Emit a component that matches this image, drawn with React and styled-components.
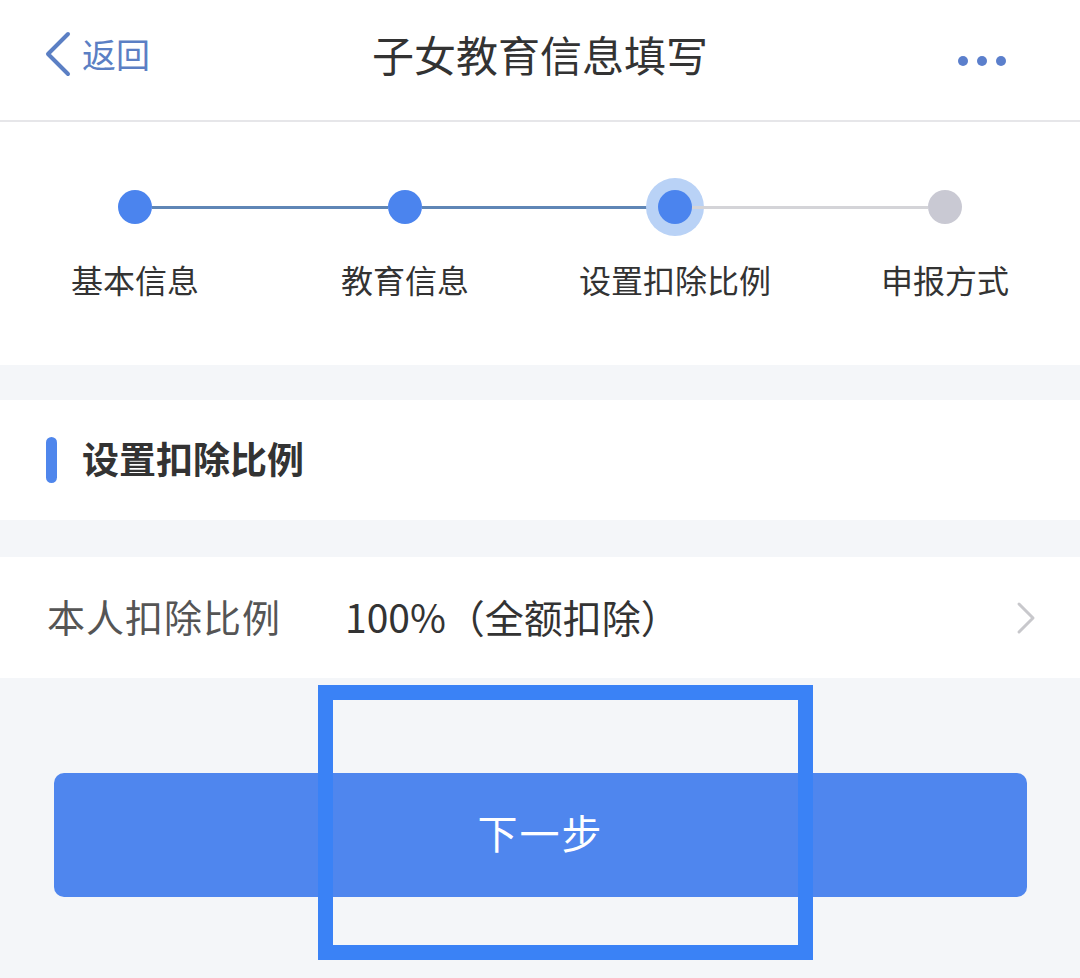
import React from "react"
import styled, { createGlobalStyle } from "styled-components"

const GlobalStyle = createGlobalStyle`
  html, body {
    margin: 0;
    padding: 0;
    background: #f4f6f9;
    font-family: "Noto Sans CJK SC", "Noto Sans", sans-serif;
  }
`

const Page = styled.div`
  position: relative;
  width: 1080px;
  height: 978px;
  overflow: hidden;
  background: #f4f6f9;
`

const Header = styled.header`
  height: 120px;
  background: #fff;
  border-bottom: 2px solid #e6e6e9;
  display: grid;
  grid-template-columns: 240px 1fr 240px;
  align-items: center;
`

const Back = styled.div`
  display: flex;
  align-items: center;
  gap: 10px;
  padding-left: 44px;
  color: #5b7fc4;
  font-size: 34px;
  line-height: 1;
  margin-top: -12px;
`

const Title = styled.h1`
  margin: 0;
  text-align: center;
  font-size: 42px;
  font-weight: 400;
  color: #333;
  letter-spacing: 0;
  margin-top: -14px;
`

const More = styled.div`
  display: flex;
  justify-content: flex-end;
  gap: 9px;
  padding-right: 74px;
  margin-top: 2px;
`

const MoreDot = styled.span`
  width: 10px;
  height: 10px;
  border-radius: 50%;
  background: #5b7fcc;
`

const Steps = styled.section`
  background: #fff;
  height: 243px;
  padding-top: 68px;
  box-sizing: border-box;
`

const Track = styled.div`
  display: flex;
  align-items: center;
  padding-left: 118px;
`

const Dot = styled.span`
  flex: none;
  width: 34px;
  height: 34px;
  border-radius: 50%;
  background: ${p => (p.$pending ? "#c9c9d3" : "#4b84ee")};
  box-shadow: ${p => (p.$active ? "0 0 0 12px #b9d2f6" : "none")};
`

const Connector = styled.span`
  flex: none;
  width: 236px;
  height: 3px;
  background: ${p => (p.$done ? "#5f86b6" : "#d4d4d8")};
`

const Labels = styled.div`
  display: grid;
  grid-template-columns: repeat(4, 270px);
  margin-top: 35px;
`

const Label = styled.div`
  text-align: center;
  font-size: 32px;
  line-height: 40px;
  color: #333;
`

const Gap = styled.div`
  height: ${p => p.$h}px;
`

const SectionHead = styled.div`
  height: 120px;
  background: #fff;
  display: flex;
  align-items: center;
  padding-left: 46px;
  gap: 25px;
`

const Bar = styled.span`
  width: 11px;
  height: 46px;
  border-radius: 6px;
  background: #4f86ec;
`

const SectionTitle = styled.h2`
  margin: 0;
  font-size: 37px;
  font-weight: 700;
  color: #333;
  margin-top: -4px;
`

const Row = styled.div`
  height: 121px;
  background: #fff;
  display: flex;
  align-items: center;
  padding: 0 44px 0 47px;
`

const RowLabel = styled.span`
  width: 298px;
  font-size: 38px;
  color: #555;
  letter-spacing: 1px;
  margin-top: -4px;
`

const RowValue = styled.span`
  flex: 1;
  font-size: 39px;
  color: #333;
  margin-top: -4px;
`

const Footer = styled.div`
  padding: 95px 53px 0 54px;
`

const NextButton = styled.button`
  width: 100%;
  height: 124px;
  border: none;
  border-radius: 10px;
  background: #4f86ee;
  color: #fff;
  font-family: inherit;
  font-size: 40px;
  letter-spacing: 2px;
  padding-bottom: 8px;
`

const Highlight = styled.div`
  position: absolute;
  left: 318px;
  top: 685px;
  width: 495px;
  height: 275px;
  box-sizing: border-box;
  border: 15px solid #3a82f6;
  pointer-events: none;
`

const steps = ["基本信息", "教育信息", "设置扣除比例", "申报方式"]
const current = 2

function App() {
  return (
    <Page>
      <GlobalStyle />
      <Header>
        <Back>
          <svg width="28" height="46" viewBox="0 0 28 46">
            <path d="M24 3 L4 23 L24 43" fill="none" stroke="#5b7fc4" strokeWidth="4" strokeLinecap="round" strokeLinejoin="round" />
          </svg>
          <span>返回</span>
        </Back>
        <Title>子女教育信息填写</Title>
        <More>
          <MoreDot />
          <MoreDot />
          <MoreDot />
        </More>
      </Header>

      <Steps>
        <Track>
          {steps.map((s, i) => (
            <React.Fragment key={s}>
              <Dot $active={i === current} $pending={i > current} />
              {i < steps.length - 1 && <Connector $done={i < current} />}
            </React.Fragment>
          ))}
        </Track>
        <Labels>
          {steps.map(s => <Label key={s}>{s}</Label>)}
        </Labels>
      </Steps>

      <Gap $h={35} />
      <SectionHead>
        <Bar />
        <SectionTitle>设置扣除比例</SectionTitle>
      </SectionHead>
      <Gap $h={37} />

      <Row>
        <RowLabel>本人扣除比例</RowLabel>
        <RowValue>100%（全额扣除）</RowValue>
        <svg width="20" height="34" viewBox="0 0 20 34">
          <path d="M3 3 L17 17 L3 31" fill="none" stroke="#c8c8cc" strokeWidth="3" strokeLinecap="round" strokeLinejoin="round" />
        </svg>
      </Row>

      <Footer>
        <NextButton>下一步</NextButton>
      </Footer>

      <Highlight />
    </Page>
  )
}

export default App
